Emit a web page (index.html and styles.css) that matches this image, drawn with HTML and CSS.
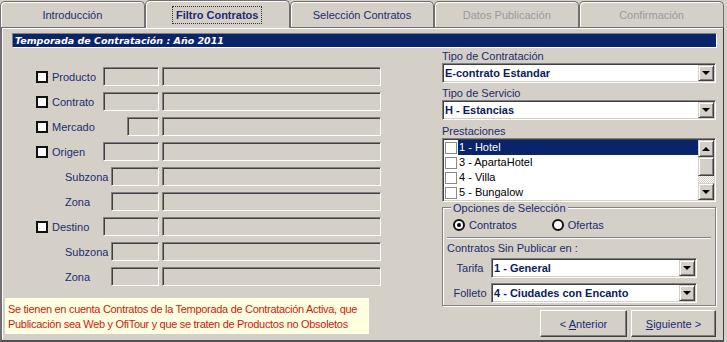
FILE: index.html
```html
<!DOCTYPE html>
<html lang="es">
<head>
    <meta charset="UTF-8">
    <title>Filtro Contratos</title>
    <link rel="stylesheet" href="styles.css">
</head>
<body>
    <div class="window">
        <div class="tabs">
            <div class="tab">Introducción</div>
            <div class="tab tab-active"><span class="focus">Filtro Contratos</span></div>
            <div class="tab">Selección Contratos</div>
            <div class="tab tab-disabled">Datos Publicación</div>
            <div class="tab tab-disabled">Confirmación</div>
        </div>

        <div class="panel">
            <div class="caption">Temporada de Contratación : Año 2011</div>

            <div class="content">
                <!-- filtros de la izquierda -->
                <div class="filters">
                    <div class="rows">
                        <div class="row">
                            <span class="row-label"><span class="check"></span>Producto</span>
                            <span class="edit edit-code"></span>
                            <span class="edit edit-name"></span>
                        </div>
                        <div class="row">
                            <span class="row-label"><span class="check"></span>Contrato</span>
                            <span class="edit edit-code"></span>
                            <span class="edit edit-name"></span>
                        </div>
                        <div class="row">
                            <span class="row-label"><span class="check"></span>Mercado</span>
                            <span class="edit edit-code edit-short"></span>
                            <span class="edit edit-name"></span>
                        </div>
                        <div class="row">
                            <span class="row-label"><span class="check"></span>Origen</span>
                            <span class="edit edit-code"></span>
                            <span class="edit edit-name"></span>
                        </div>
                        <div class="row">
                            <span class="row-label row-label-sub">Subzona</span>
                            <span class="edit edit-code edit-mid"></span>
                            <span class="edit edit-name"></span>
                        </div>
                        <div class="row">
                            <span class="row-label row-label-sub">Zona</span>
                            <span class="edit edit-code edit-mid"></span>
                            <span class="edit edit-name"></span>
                        </div>
                        <div class="row">
                            <span class="row-label"><span class="check"></span>Destino</span>
                            <span class="edit edit-code"></span>
                            <span class="edit edit-name"></span>
                        </div>
                        <div class="row">
                            <span class="row-label row-label-sub">Subzona</span>
                            <span class="edit edit-code edit-mid"></span>
                            <span class="edit edit-name"></span>
                        </div>
                        <div class="row">
                            <span class="row-label row-label-sub">Zona</span>
                            <span class="edit edit-code edit-mid"></span>
                            <span class="edit edit-name"></span>
                        </div>
                    </div>

                    <div class="note">
                        Se tienen en cuenta Contratos de la Temporada de Contratación Activa, que<br>
                        Publicación sea Web y OfiTour y que se traten de Productos no Obsoletos
                    </div>
                </div>

                <!-- opciones de la derecha -->
                <div class="options">
                    <div class="field-label field-first">Tipo de Contratación</div>
                    <div class="combo">
                        <span class="combo-text">E-contrato Estandar</span>
                        <span class="drop"><span class="arrow-down"></span></span>
                    </div>

                    <div class="field-label">Tipo de Servicio</div>
                    <div class="combo">
                        <span class="combo-text">H - Estancias</span>
                        <span class="drop"><span class="arrow-down"></span></span>
                    </div>

                    <div class="field-label field-list">Prestaciones</div>
                    <div class="list">
                        <div class="list-items">
                            <div class="item item-selected"><span class="item-check"></span><span class="item-text">1 - Hotel</span></div>
                            <div class="item"><span class="item-check"></span><span class="item-text">3 - ApartaHotel</span></div>
                            <div class="item"><span class="item-check"></span><span class="item-text">4 - Villa</span></div>
                            <div class="item"><span class="item-check"></span><span class="item-text">5 - Bungalow</span></div>
                        </div>
                        <div class="scrollbar">
                            <span class="scroll-btn"><span class="arrow-up"></span></span>
                            <span class="scroll-thumb"></span>
                            <span class="scroll-track"></span>
                            <span class="scroll-btn"><span class="arrow-down"></span></span>
                        </div>
                    </div>

                    <div class="group">
                        <span class="legend">Opciones de Selección</span>
                        <div class="radios">
                            <span class="radio-option"><span class="radio radio-on"></span>Contratos</span>
                            <span class="radio-option"><span class="radio"></span>Ofertas</span>
                        </div>
                        <div class="separator"></div>
                        <div class="group-title">Contratos Sin Publicar en :</div>
                        <div class="combo-row">
                            <span class="combo-label">Tarifa</span>
                            <div class="combo combo-small">
                                <span class="combo-text">1 - General</span>
                                <span class="drop"><span class="arrow-down"></span></span>
                            </div>
                        </div>
                        <div class="combo-row">
                            <span class="combo-label">Folleto</span>
                            <div class="combo combo-small">
                                <span class="combo-text">4 - Ciudades con Encanto</span>
                                <span class="drop"><span class="arrow-down"></span></span>
                            </div>
                        </div>
                    </div>

                    <div class="buttons">
                        <button class="btn btn-prev">&lt; <u>A</u>nterior</button>
                        <button class="btn btn-next"><u>S</u>iguiente &gt;</button>
                    </div>
                </div>
            </div>
        </div>
    </div>
</body>
</html>
```

FILE: styles.css
```css
* {
    margin: 0;
    padding: 0;
    box-sizing: border-box;
}

body {
    width: 727px;
    height: 342px;
    background: #d4d0c8;
    font-family: 'Liberation Sans', Arial, sans-serif;
    font-size: 11px;
    color: #1c2b6e;
    overflow: hidden;
}

.window {
    display: flex;
    flex-direction: column;
    height: 342px;
}

/* pestañas */
.tabs {
    display: flex;
    align-items: flex-end;
    height: 28px;
    padding-right: 3px;
    position: relative;
    z-index: 1;
}

.tab {
    flex: 1;
    height: 26px;
    margin-bottom: 1px;
    display: flex;
    align-items: center;
    justify-content: center;
    border: 1px solid #6f6f6f;
    border-bottom: none;
    border-radius: 5px 5px 0 0;
    box-shadow: inset 1px 1px #fff;
    color: #1c2b6e;
}

.tab-active {
    height: 28px;
    margin-bottom: 0;
    background: #d4d0c8;
    font-weight: bold;
}

.tab-disabled {
    color: #9c9a94;
}

.focus {
    padding: 2px 3px;
    border: 1px dotted #333;
}

/* panel principal */
.panel {
    flex: 1;
    margin-top: -1px;
    margin-right: 3px;
    border-top: 1px solid #6f6f6f;
    border-left: 2px solid #6f6f6f;
    border-right: 1px solid #404040;
    border-bottom: 2px solid #505050;
    box-shadow: inset 1px 1px #fff;
    padding: 5px 6px 0 3px;
}

.caption {
    margin-left: 7px;
    height: 15px;
    background: #0a246a;
    color: #fff;
    font-family: 'DejaVu Sans', Verdana, sans-serif;
    font-size: 9.5px;
    font-weight: bold;
    font-style: italic;
    line-height: 13px;
    padding-left: 2px;
    border: 1px solid;
    border-color: #808080 #fff #fff #808080;
}

.content {
    display: flex;
}

.filters {
    width: 437px;
}

.rows {
    display: flex;
    flex-direction: column;
    gap: 6px;
    margin-top: 19px;
}

.row {
    display: grid;
    grid-template-columns: 95px 56px 219px;
    column-gap: 3px;
    height: 19px;
}

.row-label {
    display: flex;
    align-items: center;
    padding-left: 31px;
    gap: 4px;
}

.row-label-sub {
    padding-left: 60px;
}

.check {
    width: 12px;
    height: 12px;
    background: #fff;
    border: 2px solid #111;
}

.edit {
    height: 19px;
    border: 1px solid;
    border-color: #808080 #fff #fff #808080;
    box-shadow: inset 1px 1px #404040;
    background: #d4d0c8;
}

.edit-short {
    width: 32px;
    justify-self: end;
}

.edit-mid {
    width: 48px;
    justify-self: end;
}

.note {
    width: 364px;
    height: 36px;
    margin-top: 12px;
    padding: 4px 3px 0 3px;
    background: #ffffe1;
    color: #d0180c;
    line-height: 15px;
    white-space: nowrap;
    letter-spacing: -0.3px;
}

/* columna de opciones */
.options {
    width: 274px;
}

.field-label {
    line-height: 14px;
    margin-top: 3px;
}

.field-first {
    margin-top: 1px;
}

.field-list {
    margin-top: 4px;
}

.combo {
    display: flex;
    align-items: stretch;
    height: 20px;
    background: #fff;
    border: 1px solid;
    border-color: #808080 #fff #fff #808080;
    box-shadow: inset 1px 1px #404040, inset -1px -1px #d4d0c8;
    padding: 1px;
}

.combo-text {
    flex: 1;
    padding-left: 1px;
    display: flex;
    align-items: center;
    font-weight: bold;
    color: #0b1c5a;
}

.drop,
.scroll-btn {
    width: 16px;
    display: flex;
    align-items: center;
    justify-content: center;
    background: #d4d0c8;
    border: 1px solid;
    border-color: #d4d0c8 #404040 #404040 #d4d0c8;
    box-shadow: inset 1px 1px #fff, inset -1px -1px #808080;
}

.arrow-down {
    border-left: 4px solid transparent;
    border-right: 4px solid transparent;
    border-top: 4px solid #000;
}

.arrow-up {
    border-left: 4px solid transparent;
    border-right: 4px solid transparent;
    border-bottom: 4px solid #000;
}

/* lista de prestaciones */
.list {
    display: flex;
    height: 64px;
    background: #fff;
    border: 1px solid;
    border-color: #808080 #fff #fff #808080;
    box-shadow: inset 1px 1px #404040, inset -1px -1px #d4d0c8;
    padding: 1px;
}

.list-items {
    flex: 1;
}

.item {
    display: flex;
    align-items: center;
    height: 15px;
    color: #000;
}

.item-check {
    width: 12px;
    height: 12px;
    margin: 0 1px 0 1px;
    border: 1px solid #8a8a8a;
    background: #fff;
}

.item-text {
    flex: 1;
    height: 15px;
    line-height: 15px;
    padding-left: 1px;
}

.item-selected .item-text {
    background: #0a246a;
    color: #fff;
}

.scrollbar {
    width: 16px;
    display: flex;
    flex-direction: column;
}

.scroll-btn {
    height: 17px;
    width: 16px;
}

.scroll-thumb {
    height: 19px;
    background: #d4d0c8;
    border: 1px solid;
    border-color: #d4d0c8 #404040 #404040 #d4d0c8;
    box-shadow: inset 1px 1px #fff, inset -1px -1px #808080;
}

.scroll-track {
    flex: 1;
    background-image: repeating-conic-gradient(#fff 0 25%, #d4d0c8 0 50%);
    background-size: 2px 2px;
}

/* grupo de opciones */
.group {
    position: relative;
    margin-top: 5px;
    height: 99px;
    border: 1px solid #808080;
    box-shadow: inset 1px 1px #fff, 1px 1px #fff;
    padding: 9px 0 0 0;
}

.legend {
    position: absolute;
    top: -6px;
    left: 8px;
    padding: 0 2px;
    background: #d4d0c8;
    line-height: 13px;
}

.radios {
    display: flex;
    height: 16px;
    align-items: center;
    padding-left: 10px;
    gap: 35px;
}

.radio-option {
    display: flex;
    align-items: center;
    gap: 4px;
}

.radio {
    width: 12px;
    height: 12px;
    border-radius: 50%;
    border: 2px solid #111;
    background: #fff;
    display: flex;
    align-items: center;
    justify-content: center;
}

.radio-on::after {
    content: '';
    width: 4px;
    height: 4px;
    border-radius: 50%;
    background: #000;
}

.separator {
    margin: 4px 4px 0 4px;
    height: 2px;
    border-top: 1px solid #808080;
    border-bottom: 1px solid #fff;
}

.group-title {
    margin: 2px 0 0 4px;
    line-height: 14px;
}

.combo-row {
    display: flex;
    margin-top: 3px;
    padding-left: 6px;
}

.combo-row + .combo-row {
    margin-top: 5px;
}

.combo-label {
    width: 42px;
    display: flex;
    align-items: center;
    justify-content: center;
}

.combo-small {
    width: 206px;
}

/* botones */
.buttons {
    display: flex;
    justify-content: flex-end;
    gap: 4px;
    margin-top: 4px;
}

.btn {
    height: 27px;
    font-family: 'Liberation Sans', Arial, sans-serif;
    font-size: 11px;
    color: #1c2b6e;
    background: #d4d0c8;
    border: 1px solid;
    border-color: #fff #404040 #404040 #fff;
    box-shadow: inset -1px -1px #808080;
}

.btn-prev {
    width: 87px;
}

.btn-next {
    width: 85px;
}
```
